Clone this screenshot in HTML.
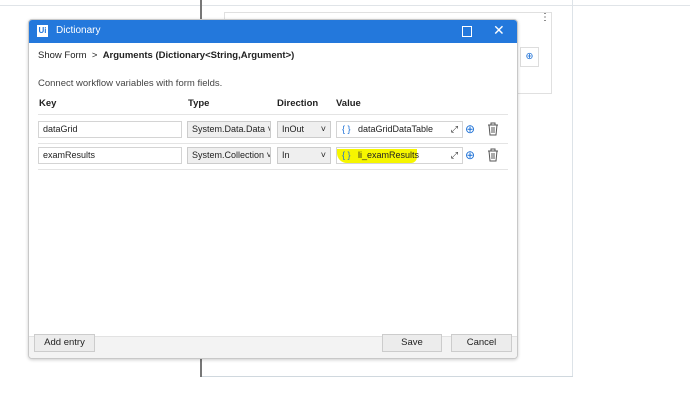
<!DOCTYPE html><html><head><style>
body{margin:0;width:690px;height:409px;background:#fff;position:relative;overflow:hidden;font-family:"Liberation Sans",sans-serif;font-size:9.5px;color:#222}
.a{position:absolute}
.inp{position:absolute;border:1px solid #d4d4d4;background:#fff;height:17px;line-height:15px;padding-left:4px;box-sizing:border-box;font-size:9px}
.sel{background:#efefef;border:1px solid #ccc}
.btn{position:absolute;border:1px solid #ccc;background:#ececec;height:18px;line-height:16px;text-align:center;box-sizing:border-box;font-size:9.5px}
</style></head><body>
<div class="a" style="left:0;top:5px;width:690px;height:1px;background:#e0e4e8"></div>
<div class="a" style="left:200px;top:0;width:2px;height:377px;background:#777"></div>
<div class="a" style="left:572px;top:0;width:1px;height:377px;background:#dde3e8"></div>
<div class="a" style="left:202px;top:376px;width:371px;height:1px;background:#d0d8de"></div>
<div class="a" style="left:224px;top:12px;width:326px;height:80px;border:1px solid #e0e0e0;background:#fff"></div>
<div class="a" style="left:540px;top:12px;font-size:10px">⋮</div>
<div class="a" style="left:520px;top:47px;width:17px;height:18px;border:1px solid #ddd;color:#1a6fd6;text-align:center;line-height:18px">⊕</div>
<div class="a" style="left:28px;top:19px;width:488px;height:338px;background:#fff;border:1px solid #c8c8c8;border-radius:4px;box-shadow:0 1px 3px rgba(0,0,0,.2);overflow:hidden">
 <div class="a" style="left:0;top:0;width:488px;height:23px;background:#2378dc;color:#fff">
  <div class="a" style="left:8px;top:5px;width:11px;height:12px;background:#fff;color:#2378dc;font-size:8px;font-weight:bold;line-height:12px;text-align:center">Ui</div>
  <div class="a" style="left:27px;top:5px;font-size:10px">Dictionary</div>
  <div class="a" style="left:433px;top:6px;width:8px;height:9px;border:1px solid #fff"></div>
  <div class="a" style="left:464px;top:2px;font-size:14px">✕</div>
 </div>
 <div class="a" style="left:9px;top:30px;font-size:9.5px">Show Form &nbsp;&gt;&nbsp; <b>Arguments (Dictionary&lt;String,Argument&gt;)</b></div>
 <div class="a" style="left:9px;top:58px;color:#444">Connect workflow variables with form fields.</div>
 <div class="a" style="left:10px;top:78px;font-weight:bold">Key</div>
 <div class="a" style="left:159px;top:78px;font-weight:bold">Type</div>
 <div class="a" style="left:248px;top:78px;font-weight:bold">Direction</div>
 <div class="a" style="left:307px;top:78px;font-weight:bold">Value</div>
 <div class="a" style="left:9px;top:94px;width:470px;height:1px;background:#e4e4e4"></div>
 <div class="a" style="left:9px;top:123px;width:470px;height:1px;background:#e4e4e4"></div>
 <div class="a" style="left:9px;top:149px;width:470px;height:1px;background:#e4e4e4"></div>
 <div class="inp" style="left:9px;top:101px;width:144px">dataGrid</div>
 <div class="inp sel" style="left:158px;top:101px;width:84px;overflow:hidden;white-space:nowrap">System.Data.Data ˅</div>
 <div class="inp sel" style="left:248px;top:101px;width:54px">InOut<span style="position:absolute;right:4px">˅</span></div>
 <div class="inp" style="left:307px;top:101px;width:127px;padding-left:5px"><span style="color:#1a6fd6">{ }</span>&nbsp;&nbsp; dataGridDataTable<span style="position:absolute;right:4px">⤢</span></div>
 <div class="a" style="left:436px;top:102px;color:#1a6fd6;font-size:12px">⊕</div>
 <svg class="a" style="left:458px;top:102px" width="12" height="14" viewBox="0 0 12 14"><path d="M1 3h10M4 3V1h4v2M2 3l1 10h6l1-10M5 5v6M7 5v6" fill="none" stroke="#555" stroke-width="1"/></svg>
 <div class="inp" style="left:9px;top:127px;width:144px">examResults</div>
 <div class="inp sel" style="left:158px;top:127px;width:84px;overflow:hidden;white-space:nowrap">System.Collection ˅</div>
 <div class="inp sel" style="left:248px;top:127px;width:54px">In<span style="position:absolute;right:4px">˅</span></div>
 <div class="inp" style="left:307px;top:127px;width:127px;padding-left:5px"><span style="background:#f6f600;display:inline-block;width:80px;height:14px;position:absolute;left:0;top:1px;border-radius:0 0 6px 10px"></span><span style="position:relative;color:#1a6fd6">{ }</span><span style="position:relative">&nbsp;&nbsp; li_examResults</span><span style="position:absolute;right:4px">⤢</span></div>
 <div class="a" style="left:436px;top:128px;color:#1a6fd6;font-size:12px">⊕</div>
 <svg class="a" style="left:458px;top:128px" width="12" height="14" viewBox="0 0 12 14"><path d="M1 3h10M4 3V1h4v2M2 3l1 10h6l1-10M5 5v6M7 5v6" fill="none" stroke="#555" stroke-width="1"/></svg>
 <div class="a" style="left:0;top:316px;width:488px;height:22px;background:#f3f3f3;border-top:1px solid #e2e2e2"></div>
 <div class="btn" style="left:5px;top:314px;width:61px">Add entry</div>
 <div class="btn" style="left:353px;top:314px;width:60px">Save</div>
 <div class="btn" style="left:422px;top:314px;width:61px">Cancel</div>
</div>
</body></html>
